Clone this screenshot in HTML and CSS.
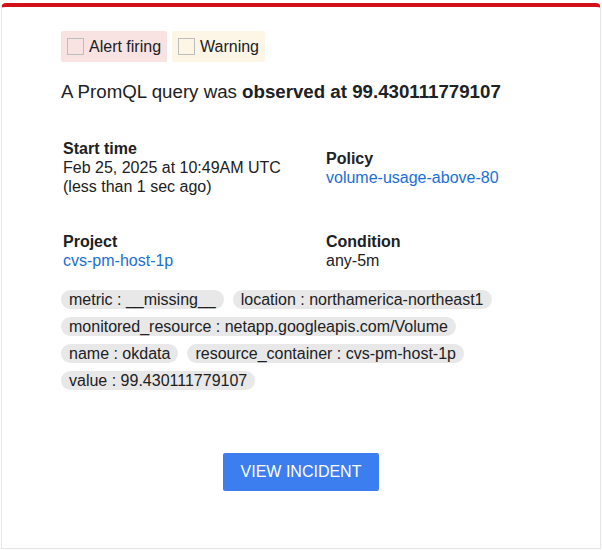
FILE: index.html
```html
<!DOCTYPE html>
<html>
<head>
<meta charset="utf-8">
<link rel="stylesheet" href="styles.css">
</head>
<body>
<div class="card">
  <div class="badges">
    <span class="badge badge-alert"><span class="box"></span>Alert firing</span>
    <span class="badge badge-warn"><span class="box"></span>Warning</span>
  </div>
  <p class="headline">A PromQL query was <b>observed at 99.430111779107</b></p>
  <table class="details">
    <tr>
      <td class="cell">
        <div class="label">Start time</div>
        <div class="value">Feb 25, 2025 at 10:49AM UTC<br>(less than 1 sec ago)</div>
      </td>
      <td class="cell">
        <div class="label">Policy</div>
        <div class="value"><a class="link" href="#">volume-usage-above-80</a></div>
      </td>
    </tr>
    <tr>
      <td class="cell">
        <div class="label">Project</div>
        <div class="value"><a class="link" href="#">cvs-pm-host-1p</a></div>
      </td>
      <td class="cell">
        <div class="label">Condition</div>
        <div class="value">any-5m</div>
      </td>
    </tr>
  </table>
  <div class="chips">
    <span class="chip">metric : __missing__</span>
    <span class="chip">location : northamerica-northeast1</span>
    <span class="chip">monitored_resource : netapp.googleapis.com/Volume</span>
    <span class="chip">name : okdata</span>
    <span class="chip">resource_container : cvs-pm-host-1p</span>
    <span class="chip">value : 99.430111779107</span>
  </div>
  <div class="actions">
    <a class="button" href="#">VIEW INCIDENT</a>
  </div>
</div>
</body>
</html>
```
FILE: styles.css
```css
html, body {
  margin: 0;
  padding: 0;
  background: #ffffff;
}
body {
  padding: 3px 0 0 1px;
  font-family: "Liberation Sans", Arial, sans-serif;
  color: #202124;
}
.card {
  box-sizing: border-box;
  width: 600px;
  height: 546px;
  border: 1px solid #e6e6e6;
  border-top: 4px solid #d3111b;
  border-radius: 5px 5px 0 0;
  padding: 24px 0 0 59px;
}
.badges {
  display: flex;
  gap: 5px;
}
.badge {
  display: inline-flex;
  align-items: center;
  height: 31px;
  padding: 0 6px 0 6px;
  border-radius: 2px;
  font-size: 16px;
  color: #202124;
}
.badge-alert { background: #f8e2e2; }
.badge-warn { background: #fdf6e7; }
.box {
  width: 17px;
  height: 17px;
  box-sizing: border-box;
  border: 1px solid #bdbdbd;
  margin-right: 5px;
}
.headline {
  margin: 18px 0 0 0;
  font-size: 18.7px;
  line-height: 24px;
}
.headline b { font-weight: bold; }
.details {
  border-collapse: collapse;
  margin-top: 35px;
  margin-left: 2px;
}
.cell {
  width: 263px;
  padding: 0 0 36px 0;
  vertical-align: middle;
  font-size: 16px;
  line-height: 19px;
}
.label {
  font-weight: bold;
  font-size: 16px;
}
.link {
  color: #1a6fd6;
  text-decoration: none;
}
.chips {
  display: flex;
  flex-wrap: wrap;
  gap: 8px 9px;
  width: 500px;
  margin-top: -16px;
}
.chip {
  background: #e8e8e8;
  border-radius: 10px;
  padding: 0 8px;
  height: 19px;
  line-height: 19px;
  font-size: 16px;
  color: #202124;
}
.actions {
  display: flex;
  justify-content: center;
  margin: 63px 59px 0 0;
}
.button {
  display: inline-block;
  background: #3c7ef0;
  color: #ffffff;
  text-decoration: none;
  font-size: 16px;
  line-height: 38px;
  height: 38px;
  padding: 0 18px;
  border-radius: 2px;
}
```
